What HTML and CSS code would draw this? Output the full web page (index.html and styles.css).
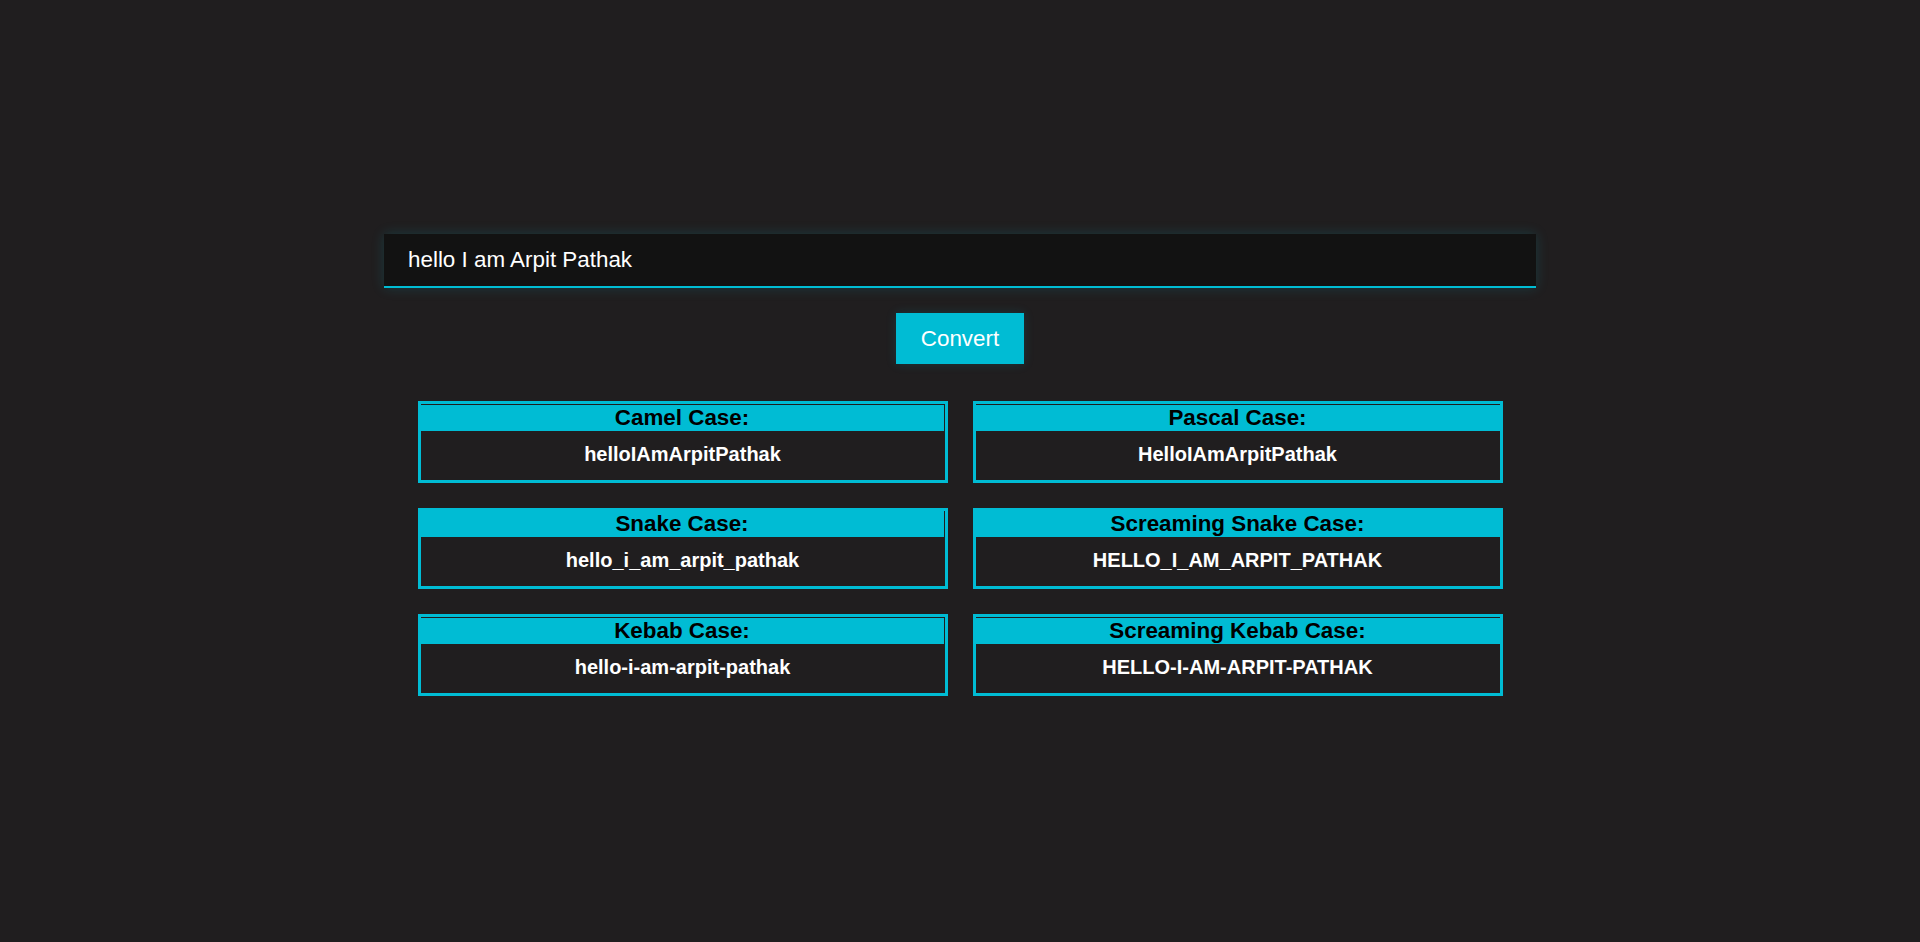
FILE: index.html
```html
<!DOCTYPE html>
<html lang="en">
<head>
<meta charset="utf-8">
<title>Case Converter</title>
<link rel="stylesheet" href="styles.css">
</head>
<body>
<main class="app">
  <div class="input-wrap">
    <input class="text-input" type="text" value="hello I am Arpit Pathak">
  </div>
  <button class="convert-btn" type="button">Convert</button>
  <section class="results">
    <div class="card gap-top gap-right">
      <div class="card-title">Camel Case:</div>
      <div class="card-value">helloIAmArpitPathak</div>
    </div>
    <div class="card gap-top">
      <div class="card-title">Pascal Case:</div>
      <div class="card-value">HelloIAmArpitPathak</div>
    </div>
    <div class="card gap-right">
      <div class="card-title">Snake Case:</div>
      <div class="card-value">hello_i_am_arpit_pathak</div>
    </div>
    <div class="card">
      <div class="card-title">Screaming Snake Case:</div>
      <div class="card-value">HELLO_I_AM_ARPIT_PATHAK</div>
    </div>
    <div class="card gap-top gap-right">
      <div class="card-title">Kebab Case:</div>
      <div class="card-value">hello-i-am-arpit-pathak</div>
    </div>
    <div class="card gap-top">
      <div class="card-title">Screaming Kebab Case:</div>
      <div class="card-value">HELLO-I-AM-ARPIT-PATHAK</div>
    </div>
  </section>
</main>
</body>
</html>
```

FILE: styles.css
```css
* {
  box-sizing: border-box;
}

html, body {
  margin: 0;
  padding: 0;
  background: #201e1f;
  height: 100%;
}

body {
  font-family: "Liberation Sans", Arial, sans-serif;
  color: #ffffff;
}

.app {
  display: flex;
  flex-direction: column;
  align-items: center;
  padding-top: 234px;
}

.input-wrap {
  width: 1152px;
}

.text-input {
  display: block;
  width: 100%;
  height: 54px;
  margin: 0;
  padding: 0 24px;
  background: #121212;
  border: none;
  border-bottom: 2px solid #00bcd4;
  color: #ffffff;
  font-family: "Liberation Sans", Arial, sans-serif;
  font-size: 22.4px;
  outline: none;
  box-shadow: 0 0 12px rgba(0, 188, 212, 0.18);
}

.convert-btn {
  margin-top: 25px;
  padding: 12px 25px;
  background: #00bcd4;
  border: none;
  color: #ffffff;
  font-family: "Liberation Sans", Arial, sans-serif;
  font-size: 22.4px;
  line-height: 27px;
  box-shadow: 0 0 10px rgba(0, 188, 212, 0.15);
  cursor: pointer;
}

.results {
  margin-top: 37px;
  display: grid;
  grid-template-columns: 530px 530px;
  column-gap: 25px;
  row-gap: 25px;
}

.card {
  border: 3px solid #00bcd4;
  display: flex;
  flex-direction: column;
}

.card-title {
  background: #00bcd4;
  color: #000000;
  font-size: 22.4px;
  font-weight: bold;
  line-height: 26px;
  text-align: center;
}

.gap-top .card-title {
  margin-top: 1px;
}

.gap-right .card-title {
  margin-right: 1px;
}

.card-value {
  height: 49px;
  padding-top: 12px;
  font-size: 20px;
  font-weight: bold;
  line-height: 23px;
  text-align: center;
  color: #ffffff;
}
```
